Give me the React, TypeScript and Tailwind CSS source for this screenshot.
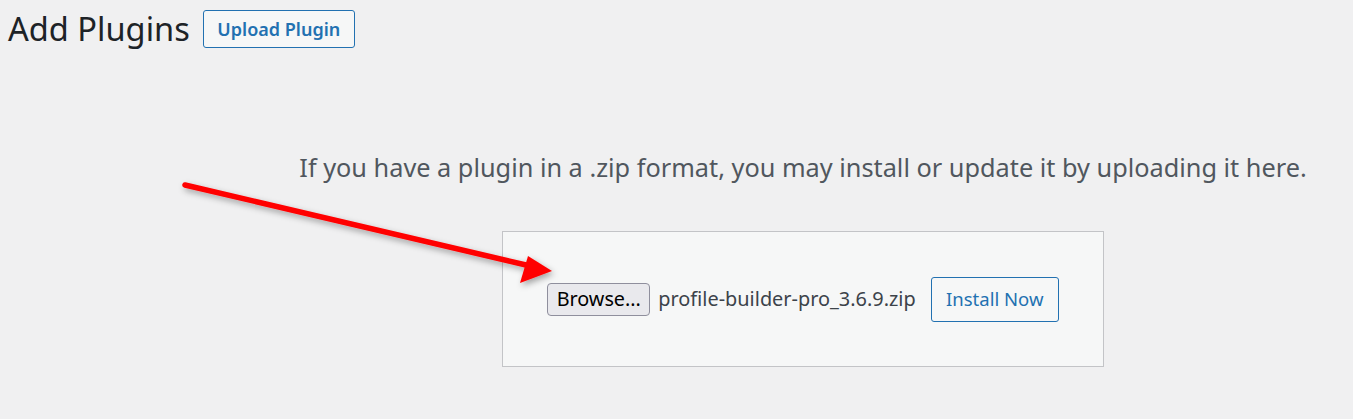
export default function App() {
  return (
    <div className="relative min-h-[419px] w-full overflow-hidden bg-[#f0f0f1] font-['Noto_Sans',sans-serif]">
      {/* Page heading */}
      <div className="flex items-center gap-[13px] pl-[8px] pt-[10px]">
        <h1 className="text-[32.6px] leading-[38px] font-normal text-[#1d2327]">Add Plugins</h1>
        <button className="h-[38px] w-[152px] rounded-[3px] border border-[#2271b1] bg-[#f6f7f7] text-[18px] font-semibold text-[#2271b1]">
          Upload Plugin
        </button>
      </div>

      {/* Upload area */}
      <div className="flex flex-col items-center pl-[253px] pt-[104px]">
        <p className="text-[25.3px] leading-[30px] text-[#50575e]">
          If you have a plugin in a .zip format, you may install or update it by uploading it here.
        </p>
        <div className="mt-[49px] flex h-[136px] w-[602px] items-center justify-center border border-[#c3c4c7] bg-[#f6f7f7]">
          <div className="flex items-center">
            <button className="h-[33px] w-[103px] rounded-[4px] border border-[#8f8f9d] bg-[#e9e9ed] text-[19.8px] text-black">
              Browse...
            </button>
            <span className="ml-[8px] text-[19.9px] text-[#3c434a]">profile-builder-pro_3.6.9.zip</span>
            <button className="ml-[15px] h-[45px] w-[128px] rounded-[3px] border border-[#2271b1] bg-[#f6f7f7] text-[18.5px] text-[#2271b1]">
              Install Now
            </button>
          </div>
        </div>
      </div>

      {/* Annotation arrow */}
      <svg className="pointer-events-none absolute left-0 top-0" width="1353" height="419">
        <defs>
          <filter id="shadow" x="-10%" y="-50%" width="120%" height="200%">
            <feDropShadow dx="2" dy="3" stdDeviation="3" floodColor="#000" floodOpacity="0.35" />
          </filter>
        </defs>
        <g filter="url(#shadow)">
          <line x1="185" y1="185" x2="526" y2="265" stroke="#ff0000" strokeWidth="5.5" strokeLinecap="round" />
          <polygon points="552,271 520,283 528,256" fill="#ff0000" />
        </g>
      </svg>
    </div>
  );
}
